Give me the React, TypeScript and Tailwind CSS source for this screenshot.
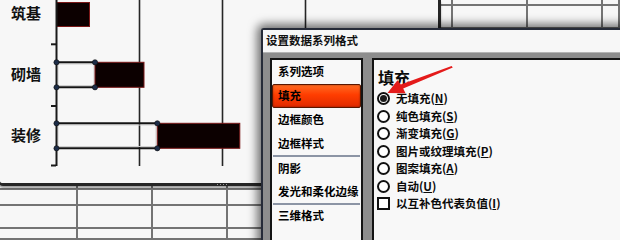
import React from "react";

const CELLS = Array.from({ length: 108 }, (_, i) => i);

function Radio({ checked }: { checked?: boolean }) {
  return (
    <span className="flex h-[13px] w-[13px] shrink-0 items-center justify-center rounded-full border-2 border-[#111] bg-white">
      {checked && <span className="h-[7px] w-[7px] rounded-full bg-[#1a1a1a]" />}
    </span>
  );
}

function Option({ label, k, checked, box }: { label: string; k: string; checked?: boolean; box?: boolean }) {
  return (
    <div className="flex h-[17.5px] items-center gap-[6px]">
      {box ? (
        <span className="h-[13px] w-[13px] shrink-0 border-2 border-[#111] bg-white" />
      ) : (
        <Radio checked={checked} />
      )}
      <span className="whitespace-nowrap text-[11.5px] font-bold leading-none text-[#0a0a0a]">
        {label}(<span className="underline">{k}</span>)
      </span>
    </div>
  );
}

function NavItem({ text, h, active }: { text: string; h: string; active?: boolean }) {
  return (
    <div
      className={
        active
          ? "flex h-[24px] items-center rounded-[2px] border border-[#5a1600] bg-[linear-gradient(to_bottom,#ff6a22,#ff3d00_45%,#e02a00)] pl-[5px] shadow-[inset_0_0_2px_rgba(0,0,0,0.45)]"
          : h === "24"
          ? "flex h-[24px] items-center pl-[6px]"
          : h === "22"
          ? "flex h-[22px] items-center pl-[6px]"
          : "flex h-[23px] items-center pl-[6px]"
      }
    >
      <span className="whitespace-nowrap text-[11.5px] font-bold leading-none text-black">{text}</span>
    </div>
  );
}

function Sep() {
  return <div className="mx-[1px] h-[2px] bg-[#8c95a5]" />;
}

export default function App() {
  return (
    <div className="relative h-[240px] w-[620px] overflow-hidden bg-[#f7f7f7] font-['Noto_Sans_CJK_SC','Noto_Sans',sans-serif]">
      {/* spreadsheet grid */}
      <div className="grid h-full w-full grid-cols-[78px_repeat(7,75px)_1fr] grid-rows-[6px_repeat(8,23px)_16px_23px_1fr]">
        {CELLS.map((i) => (
          <div key={i} className="border-b-2 border-r-2 border-[#747474]" />
        ))}
      </div>

      {/* chart window */}
      <div className="absolute left-[-2px] top-0 flex h-[186px] w-[443px] rounded-bl-[5px] border-b-[3px] border-l-2 border-r-[3px] border-[#262626] bg-[#f7f7f7] shadow-[0_2px_2px_rgba(0,0,0,0.35)]">
        <div className="flex w-[50px] shrink-0 flex-col gap-[45px] pl-[11px] pt-[5px]">
          <span className="text-[15px] font-bold leading-[16px] text-[#111]">筑基</span>
          <span className="text-[15px] font-bold leading-[16px] text-[#111]">砌墙</span>
          <span className="text-[15px] font-bold leading-[16px] text-[#111]">装修</span>
        </div>
        <svg width="388" height="183" viewBox="50 0 388 183" className="shrink-0">
          <line x1="139.5" y1="0" x2="139.5" y2="166" stroke="#262626" strokeWidth="1.6" />
          <line x1="222.5" y1="0" x2="222.5" y2="166" stroke="#262626" strokeWidth="1.6" />
          <line x1="305.5" y1="0" x2="305.5" y2="166" stroke="#262626" strokeWidth="1.6" />
          <rect x="56.5" y="2.5" width="33" height="24" fill="#0c0000" stroke="#7a1818" strokeWidth="1" />
          <rect x="58" y="64" width="36" height="21.5" fill="none" stroke="#cfcfcf" strokeWidth="1" />
          <line x1="56" y1="62.3" x2="95" y2="62.3" stroke="#141414" strokeWidth="2" />
          <line x1="56" y1="87.3" x2="95" y2="87.3" stroke="#141414" strokeWidth="2" />
          <rect x="95" y="62.3" width="49" height="25" fill="#0c0000" stroke="#7a1818" strokeWidth="1" />
          <rect x="58" y="125" width="98" height="21.5" fill="none" stroke="#cfcfcf" strokeWidth="1" />
          <line x1="56" y1="123.3" x2="157.3" y2="123.3" stroke="#141414" strokeWidth="2" />
          <line x1="56" y1="148.3" x2="157.3" y2="148.3" stroke="#141414" strokeWidth="2" />
          <rect x="157.3" y="123.3" width="82.5" height="25" fill="#0c0000" stroke="#7a1818" strokeWidth="1" />
          <line x1="56.5" y1="0" x2="56.5" y2="166" stroke="#1a1a1a" strokeWidth="2" />
          <line x1="51" y1="44.3" x2="56" y2="44.3" stroke="#1a1a1a" strokeWidth="2" />
          <line x1="51" y1="106" x2="56" y2="106" stroke="#1a1a1a" strokeWidth="2" />
          <line x1="51" y1="165.5" x2="56" y2="165.5" stroke="#1a1a1a" strokeWidth="2" />
          {[
            [56.5, 62.3],
            [95, 62.3],
            [56.5, 87.3],
            [95, 87.3],
            [56.5, 123.3],
            [157.3, 123.3],
            [56.5, 148.3],
            [157.3, 148.3],
          ].map(([cx, cy], i) => (
            <circle key={i} cx={cx} cy={cy} r="2.6" fill="#1d2d48" stroke="#0a0a0a" strokeWidth="0.6" />
          ))}
        </svg>
        <div className="absolute bottom-[-2px] left-[217px] flex gap-[2px]">
          <span className="h-[1px] w-[1px] bg-[#9a9a9a]" />
          <span className="h-[1px] w-[1px] bg-[#9a9a9a]" />
          <span className="h-[1px] w-[1px] bg-[#9a9a9a]" />
          <span className="h-[1px] w-[1px] bg-[#9a9a9a]" />
        </div>
      </div>

      {/* dialog */}
      <div className="absolute left-[261px] top-[28px] flex h-[230px] w-[380px] flex-col rounded-tl-[3px] border-l-2 border-t-2 border-[#262b38] bg-[#8d8d8d] shadow-[0_0_10px_4px_rgba(0,0,0,0.55)]">
        <div className="flex h-[22px] items-center bg-[#f7f7f7] pl-[3px]">
          <span className="whitespace-nowrap text-[11.5px] font-bold leading-none text-[#111]">设置数据系列格式</span>
        </div>
        <div className="flex flex-1 gap-[9px] border-t border-[#b4b4b4] pl-[7px] pt-[5px]">
          <div className="flex w-[93px] shrink-0 flex-col border-2 border-[#141414] bg-[#f8f8f8]">
            <NavItem text="系列选项" h="24" />
            <NavItem text="填充" h="24" active />
            <NavItem text="边框颜色" h="24" />
            <NavItem text="边框样式" h="23" />
            <Sep />
            <NavItem text="阴影" h="23" />
            <NavItem text="发光和柔化边缘" h="23" />
            <Sep />
            <NavItem text="三维格式" h="22" />
          </div>
          <div className="flex flex-1 flex-col border-2 border-[#141414] bg-[#f8f8f8] pl-[3px] pt-[8px]">
            <div className="ml-[1px] h-[18px] text-[16px] font-bold leading-[18px] text-[#0a0a0a]">填充</div>
            <div className="mt-[4px] flex flex-col">
              <Option label="无填充" k="N" checked />
              <Option label="纯色填充" k="S" />
              <Option label="渐变填充" k="G" />
              <Option label="图片或纹理填充" k="P" />
              <Option label="图案填充" k="A" />
              <Option label="自动" k="U" />
              <Option label="以互补色代表负值" k="I" box />
            </div>
          </div>
        </div>
      </div>

      {/* red annotation arrow */}
      <svg
        className="pointer-events-none absolute left-[384px] top-[62px]"
        width="72"
        height="34"
        viewBox="384 62 72 34"
      >
        <polygon
          points="387.5,93 397.5,80.2 400.8,84.4 451.6,65.9 452.8,67.6 403.2,88.6 405.5,93.2"
          fill="#e41b1b"
        />
      </svg>
    </div>
  );
}
